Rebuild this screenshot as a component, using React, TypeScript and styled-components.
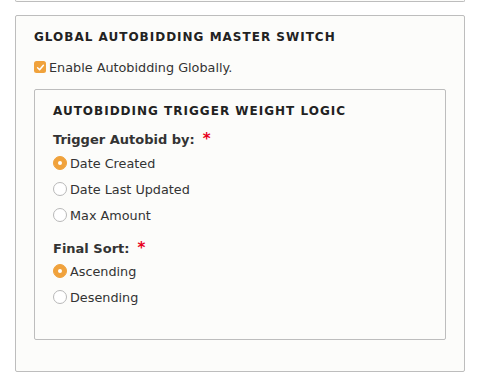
import React from "react";
import styled, { createGlobalStyle } from "styled-components";

const Global = createGlobalStyle`
  html, body { margin: 0; padding: 0; background: #ffffff; }
  body { font-family: "DejaVu Sans", Verdana, sans-serif; color: #333; }
`;

const Page = styled.div`
  width: 480px;
  padding: 0 15px;
  box-sizing: border-box;
`;

const PrevFieldset = styled.div`
  height: 2px;
  box-sizing: border-box;
  border: 1px solid #bdbdbd;
  border-top: none;
  border-radius: 0 0 2px 2px;
  background: #fcfcfa;
`;

const Fieldset = styled.section<{ $inner?: boolean }>`
  box-sizing: border-box;
  border: 1px solid #bdbdbd;
  border-radius: 2px;
  background: #fcfcfa;
  margin-top: ${(p) => (p.$inner ? "12px" : "13px")};
  padding: ${(p) => (p.$inner ? "13px 18px 29px 18px" : "13px 18px 31px 18px")};
`;

const Legend = styled.div`
  font-size: 12px;
  line-height: 16px;
  font-weight: bold;
  letter-spacing: 1px;
  color: #222;
  text-transform: uppercase;
`;

const OptionRow = styled.label<{ $h?: number }>`
  display: flex;
  align-items: center;
  gap: 3px;
  height: ${(p) => p.$h ?? 26}px;
  font-size: 12.8px;
  color: #333;
`;

const CheckRow = styled(OptionRow)`
  margin-top: 12px;
  gap: 3px;
`;

const CheckBox = styled.span`
  width: 12px;
  height: 12px;
  border-radius: 2.5px;
  background: #f0a23c;
  display: inline-flex;
  align-items: center;
  justify-content: center;
  flex: none;
`;

const Radio = styled.span<{ $on?: boolean }>`
  width: 14px;
  height: 14px;
  box-sizing: border-box;
  border-radius: 50%;
  flex: none;
  display: inline-flex;
  align-items: center;
  justify-content: center;
  background: ${(p) => (p.$on ? "#f0a23c" : "#ffffff")};
  border: 1px solid ${(p) => (p.$on ? "#f0a23c" : "#b8b8b8")};
  &::after {
    content: "";
    display: ${(p) => (p.$on ? "block" : "none")};
    width: 4px;
    height: 4px;
    border-radius: 50%;
    background: #fff;
  }
`;

const GroupLabel = styled.div<{ $first?: boolean }>`
  margin-top: 11px;
  margin-bottom: ${(p) => (p.$first ? "1px" : "0")};
  font-size: 13px;
  line-height: 18px;
  font-weight: bold;
  color: #333;
`;

const Required = styled.span`
  color: #e8001c;
  font-weight: bold;
  margin-left: 8px;
  font-size: 15px;
`;

const RadioGroup = ({ options, selected }: { options: string[]; selected: number }) => (
  <div>
    {options.map((o, i) => (
      <OptionRow key={o}>
        <Radio $on={i === selected} />
        {o}
      </OptionRow>
    ))}
  </div>
);

export default function App() {
  return (
    <>
      <Global />
      <Page>
        <PrevFieldset />
        <Fieldset>
          <Legend>Global Autobidding Master Switch</Legend>
          <CheckRow $h={20}>
            <CheckBox>
              <svg width="9" height="9" viewBox="0 0 9 9">
                <path d="M1.6 4.8 L3.6 6.7 L7.4 2.2" fill="none" stroke="#fff" strokeWidth="1.5" strokeLinecap="round" strokeLinejoin="round" />
              </svg>
            </CheckBox>
            Enable Autobidding Globally.
          </CheckRow>
          <Fieldset $inner>
            <Legend>Autobidding Trigger Weight Logic</Legend>
            <GroupLabel $first>
              Trigger Autobid by:<Required>*</Required>
            </GroupLabel>
            <RadioGroup options={["Date Created", "Date Last Updated", "Max Amount"]} selected={0} />
            <GroupLabel>
              Final Sort:<Required>*</Required>
            </GroupLabel>
            <RadioGroup options={["Ascending", "Desending"]} selected={0} />
          </Fieldset>
        </Fieldset>
      </Page>
    </>
  );
}
